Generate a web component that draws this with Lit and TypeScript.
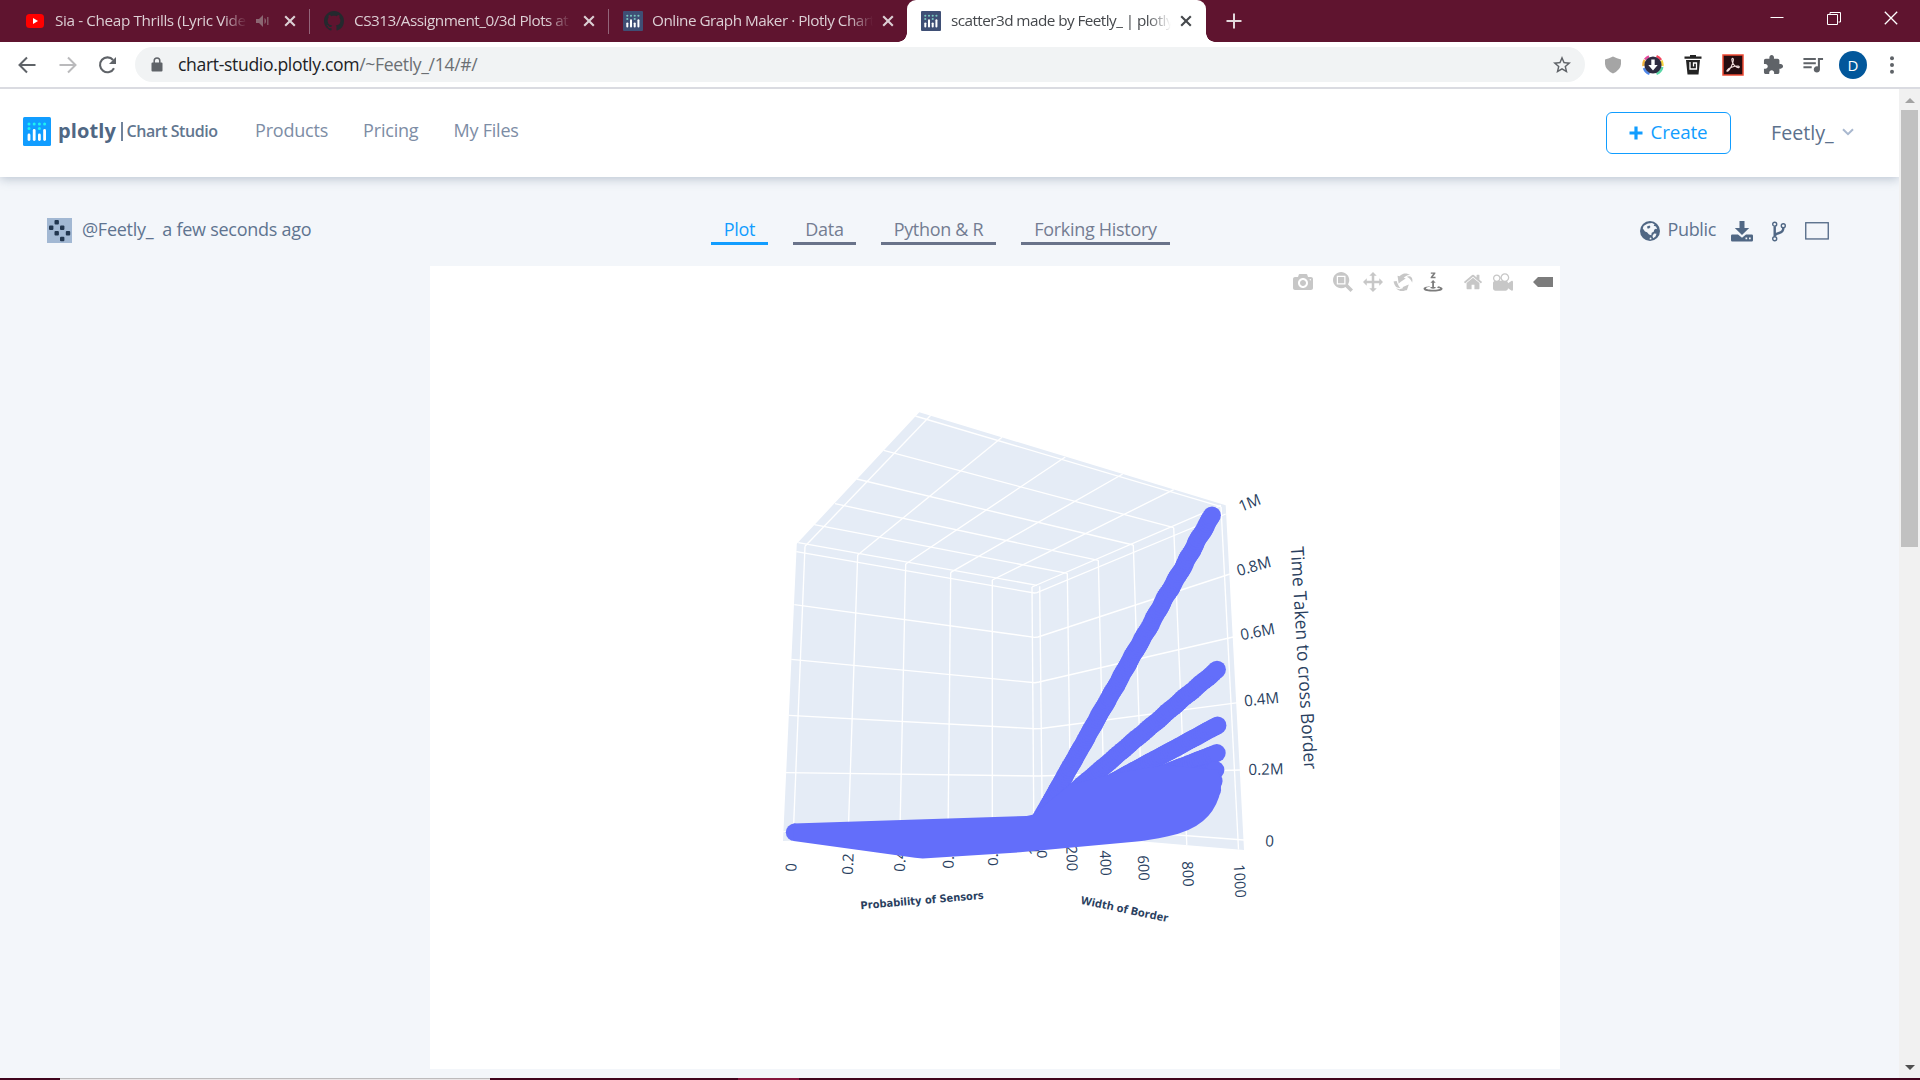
import { LitElement, html, css, svg } from "lit";
import { customElement } from "lit/decorators.js";

type P = [number, number];

/* ---------- icon set ---------- */
const plotlyMark = (bg: string, dots: string) => svg`
  <rect width="28" height="29" rx="1.5" fill="${bg}"/>
  ${[6, 11.2, 16.4, 21.6].map((x, i) => {
    const top = i % 2 ? 12 : 16.5;
    return svg`
      <circle cx="${x}" cy="7" r="1.5" fill="${dots}"/>
      ${i % 2 === 0 ? svg`<circle cx="${x}" cy="11.5" r="1.5" fill="${dots}"/>` : ""}
      <rect x="${x - 1.4}" y="${top}" width="2.8" height="${24 - top}" rx="1.4" fill="#fff"/>`;
  })}`;

const closeX = html`<svg class="x" width="12" height="12" viewBox="0 0 12 12"><path d="M1.2 1.2 10.8 10.8M10.8 1.2 1.2 10.8" stroke="currentColor" stroke-width="2.1"/></svg>`;

const modeIcons: { w: number; d: string; cls: string }[] = [
  { w: 1000, cls: "cam", d: "m500 450c-83 0-150-67-150-150 0-83 67-150 150-150 83 0 150 67 150 150 0 83-67 150-150 150z m400 150h-120c-16 0-34 13-39 29l-31 93c-6 15-23 28-40 28h-340c-16 0-34-13-39-28l-31-94c-6-15-23-28-40-28h-120c-55 0-100-45-100-100v-450c0-55 45-100 100-100h800c55 0 100 45 100 100v450c0 55-45 100-100 100z m-400-550c-138 0-250 112-250 250 0 138 112 250 250 250 138 0 250-112 250-250 0-138-112-250-250-250z m365 380c-19 0-35 16-35 35 0 19 16 35 35 35 19 0 35-16 35-35 0-19-16-35-35-35z" },
  { w: 1000, cls: "group", d: "m1000-25l-250 251c40 63 63 138 63 218 0 224-182 406-407 406-224 0-406-182-406-406s183-406 407-406c80 0 155 22 218 62l250-250 125 125z m-812 250l0 438 437 0 0-438-437 0z m62 375l313 0 0-312-313 0 0 312z" },
  { w: 1000, cls: "", d: "m1000 350l-187 188 0-125-250 0 0 250 125 0-188 187-187-187 125 0 0-250-250 0 0 125-188-188 186-187 0 125 252 0 0-250-125 0 187-188 188 188-125 0 0 250 250 0 0-126 187 188z" },
  { w: 1000, cls: "", d: "m922 660c-5 4-9 7-14 11-359 263-580-31-580-31l-102 28 58-400c0 1 1 1 2 2 118 108 351 249 351 249s-62 27-100 42c88 83 222 183 347 122 16-8 30-17 44-27-2 1-4 2-6 4z m36-329c0 0 64 229-88 296-62 27-124 14-175-11 157-78 225-208 249-266 8-19 11-31 11-31 2 5 6 15 11 32-5-13-8-20-8-20z m-775-239c70-31 117-50 198-32-121 80-199 346-199 346l-96-15-58-12c0 0 55-226 155-287z m603 133l-317-139c0 0 4-4 19-14 7-5 24-15 24-15s-177-147-389 4c235-287 536-112 536-112l31-22 100 299-4-1z m-298-153c6-4 14-9 24-15 0 0-17 10-24 15z" },
  { w: 1000, cls: "active", d: "m833 5l-17 108v41l-130-65 130-66c0 0 0 38 0 39 0-1 36-14 39-25 4-15-6-22-16-30-15-12-39-16-56-20-90-22-187-23-279-23-261 0-341 34-353 59 3 60 228 110 228 110-140-8-351-35-351-116 0-120 293-142 474-142 155 0 477 22 477 142 0 50-74 79-163 96z m-374 94c-58-5-99-21-99-40 0-24 65-43 144-43 79 0 143 19 143 43 0 19-42 34-98 40v216h87l-132 135-133-135h88v-216z m167 515h-136v1c16 16 31 34 46 52l84 109v54h-230v-71h124v-1c-16-17-28-32-44-51l-89-114v-51h245v72z" },
  { w: 928, cls: "group", d: "m786 296v-267q0-15-11-26t-25-10h-214v214h-143v-214h-214q-15 0-25 10t-11 26v267q0 1 0 2t0 2l321 264 321-264q1-1 1-4z m124 39l-34-41q-5-5-12-6h-2q-7 0-12 3l-386 322-386-322q-7-4-13-4-7 2-12 7l-35 41q-4 5-3 13t6 12l401 334q18 15 42 15t43-15l136-114v109q0 8 5 13t13 5h107q8 0 13-5t5-13v-227l122-102q5-5 6-12t-4-13z" },
  { w: 1000, cls: "", d: "m938 413l-188-125c0 37-17 71-44 94 64 38 107 107 107 187 0 121-98 219-219 219-121 0-219-98-219-219 0-61 25-117 66-156h-115c30 33 49 76 49 125 0 103-84 187-187 187s-188-84-188-187c0-57 26-107 65-141-38-22-65-62-65-109v-250c0-70 56-126 125-126h500c69 0 125 56 125 126l188-126c34 0 62 28 62 63v375c0 35-28 63-62 63z m-750 0c-69 0-125 56-125 125s56 125 125 125 125-56 125-125-56-125-125-125z m406-1c-87 0-157 70-157 157 0 86 70 156 157 156s156-70 156-156-70-157-156-157z" },
  { w: 1500, cls: "group active", d: "m375 725l0 0-375-375 375-374 0-1 1125 0 0 750-1125 0z" },
];

/* ---------- 3d scene ---------- */
const GRID: [number, number, number, number][] = [
  // left wall, verticals
  [805, 546.3, 793, 841], [857.7, 555, 848, 840], [905.7, 564, 899.8, 838], [950.7, 572.3, 948, 836], [992.3, 580, 992.3, 835], [1032, 587, 1033.9, 833],
  // right wall, verticals
  [1039.7, 586.3, 1042.4, 833], [1067.3, 573.3, 1071, 836], [1098.3, 560.3, 1105, 838], [1133.3, 545, 1143, 841.5], [1173.7, 527.7, 1186.8, 845], [1221, 506.7, 1238.5, 849.5],
  // top face
  [915.3, 416, 1221, 506.7], [883.7, 450.3, 1173.7, 527.7], [856.7, 479, 1133.3, 545], [835, 503.7, 1098.3, 560.3], [814.3, 524.7, 1067.3, 573.3], [798.3, 542.7, 1037, 585.3],
  [930.7, 415.3, 805, 546.3], [1002, 437.3, 857.7, 555], [1065.3, 457, 905.7, 564], [1122.7, 474, 950.7, 572.3], [1173.7, 489.7, 992.3, 580], [1221, 505.3, 1032, 587],
];
const BENT: P[][] = [
  [[796.3, 551.7], [1034.3, 593], [1037, 592.7], [1225.7, 514]],
  [[794.3, 604.7], [1034.7, 637.3], [1038, 637], [1230, 574]],
  [[791.3, 659.3], [1035, 682.7], [1039, 682], [1233.3, 637]],
  [[789, 715.3], [1034.7, 728.7], [1041, 728.5], [1238.3, 702.7]],
  [[786, 772.7], [1038, 776], [1240, 770]],
  [[783.3, 831.7], [1040, 824.7], [1244, 840]],
];
const ORIGIN: P = [1039, 822];
const BEAMS: P[] = [[1212, 515.3], [1217, 669.6], [1217.5, 725.4], [1216.8, 753], [1215.5, 770], [1213.7, 781], [1212.2, 790]];
const beamDots = (end: P, wobble: number) => {
  const dx = end[0] - ORIGIN[0], dy = end[1] - ORIGIN[1];
  const len = Math.hypot(dx, dy), n = Math.round(len / 2.5);
  return Array.from({ length: n + 1 }, (_, i) => {
    const t = i / n;
    const o = i === n ? 0 : wobble * (Math.sin(i * 0.71 + 0.6) + 0.6 * Math.sin(i * 0.23)) * Math.min(1, t * 1.3);
    return svg`<circle cx="${ORIGIN[0] + dx * t - (dy / len) * o}" cy="${ORIGIN[1] + dy * t + (dx / len) * o}" r="8.9"/>`;
  });
};
const LABELS: [string, number, number, number, number, number][] = [
  // text, centre x, centre y, angle, size, length
  ["1M", 1249.5, 502.7, -22, 15.5, 22.5], ["0.8M", 1253.7, 566, -16, 15.5, 35], ["0.6M", 1257.5, 631.5, -11, 15.5, 35],
  ["0.4M", 1261.5, 699, -6, 15.5, 35], ["0.2M", 1266, 769, -1, 15.5, 35], ["0", 1269.7, 841, 3, 15.5, 8.7],
  ["0", 791, 867.3, -88, 15, 8.4], ["0.2", 847.7, 864, -88, 15, 21.5], ["0.4", 899.8, 861, -88, 15, 21.5],
  ["0.6", 948.3, 858, -89, 15, 21.5], ["0.8", 992.7, 855.3, -90, 15, 21.5], ["1", 1033.5, 851, -90, 15, 8.4],
  ["0", 1042, 854.3, 90, 15, 8.4], ["200", 1072, 858.5, 89, 15, 25.5], ["400", 1105.7, 863, 88, 15, 25.5],
  ["600", 1143.7, 868, 88, 15, 25.5], ["800", 1188, 874, 87, 15, 25.5], ["1000", 1240, 881, 87, 15, 33.5],
];

@customElement("plot-scene")
class PlotScene extends LitElement {
  static styles = css`
    :host { display: block; width: 1130px; height: 803px; }
    svg { display: block; }
    .wall { fill: #e5ecf6; }
    .grid { stroke: #fff; stroke-width: 1.35; fill: none; }
    .data { fill: #636efa; }
    .lbl { fill: #2a3f5f; font-family: "Open Sans", sans-serif; text-anchor: middle; }
    .b { font-weight: 700; }
    .v { font-family: "DejaVu Sans", sans-serif; }
  `;
  render() {
    return html`<svg width="1130" height="803" viewBox="430 266 1130 803">
      <path class="wall" d="M919.3 412.2 1225.7 505.2 1244 850 1040.5 832.7 783 841 796.8 543.8Z"/>
      <g class="grid">
        ${GRID.map(([a, b, c, d]) => svg`<path d="M${a} ${b}L${c} ${d}"/>`)}
        ${BENT.map((l) => svg`<path d="${"M" + l.map((p) => p.join(" ")).join("L")}"/>`)}
      </g>
      ${LABELS.map(([t, x, y, a, s, l]) => svg`<text class="lbl" transform="translate(${x} ${y}) rotate(${a})" y="${s * 0.36}" font-size="${s}" textLength="${l}" lengthAdjust="spacingAndGlyphs">${t}</text>`)}
      <text class="lbl" transform="translate(1303.5 658) rotate(86.5)" y="6" font-size="18" textLength="223" lengthAdjust="spacingAndGlyphs">Time Taken to cross Border</text>
      <text class="lbl b v" transform="translate(922 900) rotate(-4.8)" y="4" font-size="10.6" textLength="123.5" lengthAdjust="spacingAndGlyphs">Probability of Sensors</text>
      <text class="lbl b" transform="translate(1124.7 909) rotate(12)" y="4" font-size="11" textLength="89" lengthAdjust="spacingAndGlyphs">Width of Border</text>
      <g class="data">
        ${BEAMS.map((b, i) => beamDots(b, i === 0 ? 0.4 : i === 1 ? 0.25 : 0.1))}
        <circle cx="794.5" cy="832.3" r="8.7"/>
        <path d="M793.5 823.6 1026.7 815.9 1032.4 814.7 1070 785 1112 774 1165 765 1218 770 1221.5 784 1219 797 Q1214 812 1203 821 Q1190 832 1167 836.5 Q1150 840 1137 841.5 L1020 852.3 922.7 858.4 915 857.8 793.5 841Z"/>
      </g>
    </svg>`;
  }
}

@customElement("app-root")
class AppRoot extends LitElement {
  static styles = css`
    :host { display: block; width: 1920px; height: 1080px; overflow: hidden; background: #f3f6fa; font-family: "Open Sans", sans-serif; color: #506784; }
    * { box-sizing: border-box; }
    .window { display: flex; flex-direction: column; height: 1080px; }
    svg { display: block; flex: none; }

    .tabs { display: flex; height: 42px; background: #5f142f; color: #dccfd4; font: 15.3px "Open Sans", sans-serif; }
    .tab { display: flex; align-items: center; height: 42px; flex: none; }
    .tab .t { white-space: nowrap; overflow: hidden; margin-top: -1px; -webkit-mask-image: linear-gradient(90deg, #000 calc(100% - 24px), transparent); mask-image: linear-gradient(90deg, #000 calc(100% - 24px), transparent); }
    .t1 { width: 309px; padding-left: 26px; }
    .tab.t1 .t { width: 192px; margin: -2px 9px 0 11px; letter-spacing: -0.38px; }
    .t1 .x { margin-left: 14px; }
    .t2 { width: 298px; padding-left: 13px; border-left: 1px solid transparent; }
    .tab.t2 .t { width: 217px; margin: -2px 12px 0 10px; letter-spacing: -0.5px; }
    .t3 { width: 298px; padding-left: 14px; }
    .tab.t3 .t { width: 221px; margin: -2px 9px 0 9px; letter-spacing: -0.5px; }
    .sep { width: 1px; height: 25px; background: #93657a; align-self: center; flex: none; }
    .t4 { width: 299px; background: #fff; color: #45484c; border-radius: 9px 9px 0 0; padding-left: 14px; position: relative; }
    .t4::before, .t4::after { content: ""; position: absolute; bottom: 0; width: 9px; height: 9px; }
    .t4::before { left: -9px; background: radial-gradient(circle at 0 0, transparent 8.5px, #fff 9px); }
    .t4::after { right: -9px; background: radial-gradient(circle at 100% 0, transparent 8.5px, #fff 9px); }
    .tab.t4 .t { width: 220px; margin: -2px 9px 0 10px; letter-spacing: -0.56px; }
    .plus { margin: 13px 0 0 20px; }
    .win { display: flex; gap: 43px; margin-left: auto; padding: 11px 22px 0 0; }

    .bar { display: flex; align-items: center; height: 47px; background: #fff; border-bottom: 2px solid #dadbe1; padding-left: 17px; color: #5f6368; }
    .nav { display: flex; gap: 20px; width: 118px; align-items: center; }
    .url { display: flex; align-items: center; width: 1450px; height: 35px; border-radius: 18px; background: #f1f3f4; padding: 0 14px 0 16px; }
    .url .a { flex: 1; margin-left: 15px; margin-top: -1px; font-size: 17.6px; letter-spacing: -0.35px; color: #6b6f73; white-space: nowrap; }
    .url .a b { font-weight: 400; color: #202124; }
    .ext { display: flex; align-items: center; margin-left: 18px; }
    .ext svg { margin-right: 19px; }
    .ext .q { margin-right: 15px; }
    .ava { width: 28px; height: 28px; border-radius: 50%; background: #02579b; color: #fff; font-size: 15px; text-align: center; line-height: 28px; margin-right: 23px; }

    .body { display: flex; height: 989px; }
    .page { width: 1899px; display: flex; flex-direction: column; }
    .head { display: flex; height: 88px; background: #fff; box-shadow: 0 2px 10px rgba(80,103,132,.35); position: relative; clip-path: inset(0 0 -14px 0); padding-left: 23px; flex: none; }
    .logo { display: flex; align-items: center; padding-bottom: 3px; width: 232px; }
    .logo .p { font: 700 20px "Open Sans"; letter-spacing: .1px; margin-left: 7px; width: 63px; line-height: 26px; margin-top: -2px; color: #506784; }
    .logo i { width: 1.5px; height: 19px; background: #71839b; margin-right: 4px; }
    .logo .c { font: 600 16px "Open Sans"; letter-spacing: -.45px; white-space: nowrap; margin-top: -1px; color: #62768f; }
    .menu { display: flex; gap: 35px; font-size: 18px; line-height: 82px; color: #7d8da5; letter-spacing: -.2px; }
    .right { display: flex; margin-left: auto; }
    .create { display: flex; align-items: center; justify-content: center; gap: 7px; width: 125px; height: 42px; margin-top: 23px; border: 1.5px solid #119dff; border-radius: 6px; color: #119dff; font-size: 18.8px; letter-spacing: -.1px; padding-bottom: 2px; }
    .create svg { margin-top: 1px; }
    .user { display: flex; align-items: center; gap: 8px; margin: 0 42px 0 40px; padding-bottom: 2px; font-size: 19.7px; color: #5c718c; width: 86px; }

    .meta { display: flex; height: 89px; align-items: flex-start; padding-left: 47px; flex: none; font-size: 18px; color: #5f7490; }
    .owner { display: flex; align-items: center; width: 664px; margin-top: 41px; height: 25px; letter-spacing: -.27px; }
    .owner span { margin: -3px 0 0 10px; }
    .owner span + span { margin-left: 9px; }
    .sub { display: flex; gap: 25px; width: 929px; color: #747d92; text-align: center; }
    .sub div { display: flex; justify-content: center; width: 63px; height: 68px; padding-top: 39px; line-height: 26px; border-bottom: 3px solid #69738a; white-space: nowrap; letter-spacing: -.3px; }
    .sub .on { width: 57px; color: #119dff; border-color: #119dff; }
    .sub .py { width: 115px; }
    .sub .fh { width: 149px; }
    .acts { display: flex; align-items: center; margin-top: 41px; height: 26px; }
    .acts span { width: 49px; margin: -4px 14px 0 7.5px; letter-spacing: -.35px; }
    .panel { width: 1130px; height: 803px; margin-left: 430px; background: #fff; position: relative; flex: none; }
    .mode { position: absolute; right: 7px; top: 6px; display: flex; align-items: center; height: 20px; }
    .mode svg { margin-left: 10px; fill: #c7c7c7; }
    .mode .group { margin-left: 20px; }
    .mode .active { fill: #7c7c7c; }

    .scroll { width: 21px; background: #f1f1f1; display: flex; flex-direction: column; align-items: center; }
    .scroll .th { width: 17px; height: 437px; background: #c1c1c1; margin-top: 7px; }
    .scroll .up { margin-top: 9px; } .scroll .dn { margin-top: auto; margin-bottom: 8px; }
    .task { display: flex; height: 2px; background: #40041d; padding-left: 60px; }
    .task .w { width: 430px; background: #e9e5e6; border-top: 1px solid #bdbbbc; }
    .task .m { width: 61px; margin-left: 248px; background: #85153d; }
  `;

  render() {
    const fav = html`<svg width="20" height="20" viewBox="0 0 28 29" preserveAspectRatio="none">${plotlyMark("#3f4f75", "#7ac8c0")}</svg>`;
    return html`<div class="window">
      <div class="tabs">
        <div class="tab t1">
          <svg width="18" height="14"><rect width="18" height="14" rx="3.5" fill="#f00"/><path d="M7 4v6l5-3z" fill="#fff"/></svg>
          <span class="t">Sia - Cheap Thrills (Lyric Video</span>
          <svg width="14" height="12" viewBox="0 0 14 12"><path d="M0 4h3l4-4v12L3 8H0zM8.5 3v6c2-1 2-5 0-6z" fill="#8b6672"/><path d="M11.8 2v8" stroke="#8b6672" stroke-width="1.2"/></svg>
          ${closeX}
        </div>
        <div class="sep"></div>
        <div class="tab t2">
          <svg width="20" height="20" viewBox="0 0 16 16"><path fill="#24292e" d="M8 0C3.58 0 0 3.58 0 8c0 3.54 2.29 6.53 5.47 7.59.4.07.55-.17.55-.38 0-.19-.01-.82-.01-1.49-2.01.37-2.53-.49-2.69-.94-.09-.23-.48-.94-.82-1.13-.28-.15-.68-.52-.01-.53.63-.01 1.08.58 1.23.82.72 1.21 1.87.87 2.33.66.07-.52.28-.87.51-1.07-1.78-.2-3.64-.89-3.64-3.95 0-.87.31-1.59.82-2.15-.08-.2-.36-1.02.08-2.12 0 0 .67-.21 2.2.82.64-.18 1.32-.27 2-.27s1.36.09 2 .27c1.53-1.04 2.2-.82 2.2-.82.44 1.1.16 1.92.08 2.12.51.56.82 1.27.82 2.15 0 3.07-1.87 3.75-3.65 3.95.29.25.54.73.54 1.48 0 1.07-.01 1.93-.01 2.2 0 .21.15.46.55.38A8.01 8.01 0 0 0 16 8c0-4.42-3.58-8-8-8z"/></svg>
          <span class="t">CS313/Assignment_0/3d Plots at</span>${closeX}
        </div>
        <div class="sep"></div>
        <div class="tab t3">${fav}<span class="t">Online Graph Maker · Plotly Chart</span>${closeX}</div>
        <div class="tab t4">${fav}<span class="t">scatter3d made by Feetly_ | plotly</span>${closeX}</div>
        <svg class="plus" width="16" height="16"><path d="M8 .5v15M.5 8h15" stroke="#e3d8dc" stroke-width="2"/></svg>
        <div class="win">
          <svg width="14" height="14"><path d="M.5 6.5h13" stroke="#fff"/></svg>
          <svg width="14" height="14" fill="none" stroke="#fff"><path d="M.5 3.5h10v10H.5zM3 3.5V1.5h10.500v9.500h-2"/></svg>
          <svg width="14" height="14"><path d="M.8.8l12.400 12.400M13.200.8.8 13.200" stroke="#fff" stroke-width="1.3"/></svg>
        </div>
      </div>

      <div class="bar">
        <div class="nav">
          <svg width="20" height="20" fill="none" stroke="#5f6368" stroke-width="2"><path d="M18.500 10H2.500M10 2.500 2.500 10l7.500 7.500"/></svg>
          <svg width="20" height="20" fill="none" stroke="#bababc" stroke-width="2"><path d="M2.500 10h16M11 2.500l7.500 7.500-7.500 7.500"/></svg>
          <svg width="20" height="20" fill="none" stroke="#5f6368" stroke-width="2.100"><path d="M17 13.200A7.400 7.400 0 1 1 16.100 5"/><path d="M19 2v7h-7z" fill="#5f6368" stroke="none"/></svg>
        </div>
        <div class="url">
          <svg width="12" height="15"><path d="M1.500 5.500h9a1 1 0 0 1 1 1v7a1 1 0 0 1-1 1h-9a1 1 0 0 1-1-1v-7a1 1 0 0 1 1-1z" fill="#5f6368"/><path d="M3.200 6V3.700a2.800 2.800 0 0 1 5.600 0V6" fill="none" stroke="#5f6368" stroke-width="1.500"/></svg>
          <span class="a"><b>chart-studio.plotly.com</b>/~Feetly_/14/#/</span>
          <svg width="18" height="18" viewBox="2 2 20 20"><path fill="#5f6368" d="M22 9.240l-7.190-.62L12 2 9.190 8.630 2 9.240l5.460 4.730L5.820 21 12 17.270 18.180 21l-1.630-7.030L22 9.240zM12 15.400l-3.760 2.270 1-4.280-3.320-2.880 4.380-.38L12 6.100l1.710 4.040 4.380.38-3.320 2.880 1 4.280L12 15.400z"/></svg>
        </div>
        <div class="ext">
          <svg width="20" height="20"><path d="M2 4.500Q6 3.500 10 1.500 14 3.500 18 4.500V9Q17.500 15 10 18.500 2.500 15 2 9z" fill="#a5a5a5"/></svg>
          <svg width="22" height="22" viewBox="0 0 22 22"><g fill="none" stroke-width="2.500"><path d="M3 5.500A9.500 9.500 0 0 1 7 2.300" stroke="#e34b9c"/><path d="M14.500 2.200A9.500 9.500 0 0 1 19 6" stroke="#f3435c"/><path d="M19.400 6.500A9.500 9.500 0 0 1 20.400 12" stroke="#f5d33b"/><path d="M20.300 13A9.500 9.500 0 0 1 14.500 19.800" stroke="#59d6a6"/><path d="M7.500 19.800A9.500 9.500 0 0 1 2 14" stroke="#4f87e8"/><path d="M1.500 12A9.500 9.500 0 0 1 2.800 6" stroke="#f2b33c"/></g><circle cx="11" cy="11" r="8.600" fill="#2e2b40"/><path d="M9.300 5.500h3.400v5.500h3L11 16.500 6.300 11h3z" fill="#fff"/></svg>
          <svg width="20" height="22" viewBox="0 0 20 22"><path d="M1.500 2.500h5.500V1h6v1.500h5.500v2.200h-17zM3 6h14l-1.500 14.500h-11z" fill="#232323"/><path d="M7 8v7h6.500V9h-3v3.500" fill="none" stroke="#fff" stroke-width="1.300"/></svg>
          <svg width="22" height="22" viewBox="0 0 22 22"><rect x="1" y="1" width="20" height="20" fill="#260c10" stroke="#ee4a33" stroke-width="1.500"/><path d="M5 16.500c1.500-2.500 7-4.500 11-4.500 2.500.5 1 2.500-1.500 1C12 11.500 10 8 9.800 5.500c.5-2 2-1 1.500 1C11 10 8 15.500 6 17q-1.500.7-1-.5z" fill="none" stroke="#f3dede" stroke-width="1.100"/></svg>
          <svg width="21" height="20" viewBox="2 1 21 22"><path fill="#5f6368" d="M20.500 11H19V7c0-1.100-.9-2-2-2h-4V3.500C13 2.120 11.880 1 10.500 1S8 2.120 8 3.500V5H4c-1.100 0-1.990.9-1.990 2v3.800H3.500c1.490 0 2.700 1.210 2.700 2.700s-1.210 2.700-2.700 2.700H2V20c0 1.100.9 2 2 2h3.800v-1.500c0-1.490 1.210-2.700 2.700-2.700 1.490 0 2.700 1.210 2.700 2.700V22H17c1.100 0 2-.9 2-2v-4h1.500c1.380 0 2.500-1.120 2.500-2.500S21.880 11 20.500 11z"/></svg>
          <svg class="q" width="21" height="16" viewBox="3 5 19.500 15.500"><path fill="#5f6368" d="M15 6H3v2h12V6zm0 4H3v2h12v-2zM3 16h8v-2H3v2zM17 6v8.180c-.31-.11-.65-.18-1-.18-1.660 0-3 1.340-3 3s1.340 3 3 3 3-1.340 3-3V8h3V6h-5z"/></svg>
          <div class="ava">D</div>
          <svg width="4" height="18" fill="#5f6368"><circle cx="2" cy="2.200" r="2"/><circle cx="2" cy="9" r="2"/><circle cx="2" cy="15.800" r="2"/></svg>
        </div>
      </div>

      <div class="body">
        <div class="page">
          <div class="head">
            <div class="logo">
              <svg width="28" height="29">${plotlyMark("#119dff", "#1ff2f2")}</svg>
              <span class="p">plotly</span><i></i><span class="c">Chart Studio</span>
            </div>
            <div class="menu"><span>Products</span><span>Pricing</span><span>My Files</span></div>
            <div class="right">
              <div class="create"><svg width="14" height="14"><path d="M7 .5v13M.5 7h13" stroke="#119dff" stroke-width="3.200"/></svg>Create</div>
              <div class="user">Feetly_<svg width="12" height="8"><path d="M1 1.200 6 6.200 11 1.200" fill="none" stroke="#a9b8cf" stroke-width="2"/></svg></div>
            </div>
          </div>
          <div class="meta">
            <div class="owner">
              <svg width="25" height="25"><rect width="25" height="25" fill="#a2b8d3"/><g fill="#22364f">${[[7.5, 2], [2, 7.5], [13, 7.5], [7.5, 13], [18.8, 13], [13, 18.8]].map(([x, y]) => svg`<rect x="${x}" y="${y}" width="4.400" height="4.400" rx="1"/>`)}</g></svg>
              <span>@Feetly_</span><span>a few seconds ago</span>
            </div>
            <div class="sub"><div class="on">Plot</div><div>Data</div><div class="py">Python &amp; R</div><div class="fh">Forking History</div></div>
            <div class="acts">
              <svg width="20" height="20" viewBox="0 0 20 20"><circle cx="10" cy="10" r="10" fill="#506784"/><path d="M8 2.500 12 2l2.500 1.200-.8 1.600 2.300.8 1.200 2.600-1.500-.4-1.500 1-.5 2-2 1-.4 2.500L9 13.500l-2-2.300L5 10.500 2.800 7.500l.8-2.400L6 3.500zM14 12.500l2.500.3-1 2.600-2.300 1.800-.8-2.200zM10 16.500l1.500.5-.3 1.400-1.700-.2z" fill="#f3f6fa"/><path d="M7 5.500l2.500-1 1 1.500-1.500 1.500-1.500 0z" fill="#506784"/></svg>
              <span>Public</span>
              <svg width="22" height="21" viewBox="0 0 22 21"><path d="M8.500 0h5v7h4.700L11 14 3.800 7h4.700z" fill="#506784"/><path fill-rule="evenodd" d="M1.300 13.500h5.700l4 3.300 4-3.300h5.700q1.300 0 1.300 1.300v4.400q0 1.300-1.300 1.300H1.300Q0 20.500 0 19.200v-4.400q0-1.300 1.300-1.300zM14.500 16.500v1.700h1.700v-1.700zM18 16.500v1.700h1.700v-1.700z" fill="#506784"/></svg>
              <svg width="52" height="21" viewBox="0 0 52 21" fill="none" stroke="#506784"><g transform="translate(18.500 .5)" stroke-width="1.400"><circle cx="3.200" cy="2.700" r="2"/><circle cx="3.200" cy="17.300" r="2"/><circle cx="11.800" cy="4.200" r="2"/><path d="M3.200 5v10M11.800 6.500q0 4-4.200 5-3.500.8-4.400 2.700" stroke-width="2.400"/></g></svg>
              <svg width="24" height="18"><rect x=".75" y=".75" width="22.500" height="16.200" fill="none" stroke="#506784" stroke-width="1.300"/></svg>
            </div>
          </div>
          <div class="panel">
            <plot-scene></plot-scene>
            <div class="mode">
              ${modeIcons.map((m) => html`<svg class="${m.cls}" height="20" width="20" viewBox="0 0 ${m.w} 1000"><path transform="matrix(1 0 0 -1 0 850)" d="${m.d}"/></svg>`)}
            </div>
          </div>
        </div>
        <div class="scroll">
          <svg class="up" width="10" height="5"><path d="M0 5 5 0l5 5z" fill="#a3a3a3"/></svg>
          <div class="th"></div>
          <svg class="dn" width="10" height="5"><path d="M0 0h10L5 5z" fill="#505050"/></svg>
        </div>
      </div>
      <div class="task"><div class="w"></div><div class="m"></div></div>
    </div>`;
  }
}
